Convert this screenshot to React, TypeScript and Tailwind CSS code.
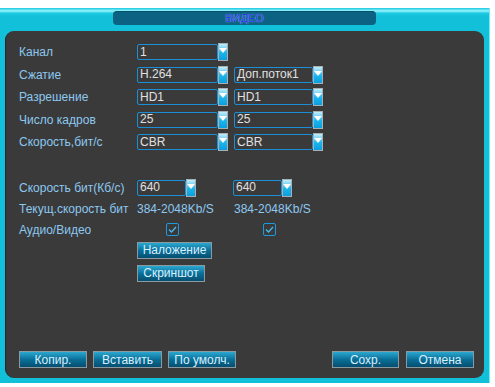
import React from "react";

const font = { fontFamily: '"Liberation Sans", Arial, sans-serif' };

function Arrow() {
  return (
    <div className="w-[10px] h-[18px] border border-[#a8b0b4] bg-gradient-to-b from-[#bfeefc] via-[#1cb8ee] to-[#0a9ee0] flex items-start justify-center pt-[4px]">
      <svg width="8" height="5" viewBox="0 0 8 5">
        <polygon points="0,0 8,0 4,5" fill="#ffffff" />
      </svg>
    </div>
  );
}

function Select({ value, w }: { value: string; w: string }) {
  return (
    <div className="flex items-center">
      <div className={`${w} h-[16px] border-[1.5px] border-[#1a8fd6] rounded-[2px] bg-[#3a3a3a] text-[#e0e0e0] text-[12px] leading-[13px] pl-[2px] flex items-center`}>
        {value}
      </div>
      <Arrow />
    </div>
  );
}

function Btn({ label, w }: { label: string; w: string }) {
  return (
    <div className={`${w} h-[17px] border border-[#8a9aa0] bg-gradient-to-b from-[#2aa8d0] via-[#0a6f98] to-[#064e70] text-[#d8f0ff] text-[12px] flex items-center justify-center leading-none`}>
      {label}
    </div>
  );
}

function Check() {
  return (
    <div className="w-[13px] h-[13px] border border-[#1a9ae0] rounded-[2px] flex items-center justify-center">
      <svg width="9" height="7" viewBox="0 0 9 7">
        <polyline points="1,3.5 3.5,6 8,1" fill="none" stroke="#4ab8f0" strokeWidth="1.3" />
      </svg>
    </div>
  );
}

function Label({ children }: { children: React.ReactNode }) {
  return <div className="w-[118px] text-[#8cc8f0] text-[12px]">{children}</div>;
}

export default function App() {
  const rows = [
    ["Канал", "1", null],
    ["Сжатие", "H.264", "Доп.поток1"],
    ["Разрешение", "HD1", "HD1"],
    ["Число кадров", "25", "25"],
    ["Скорость,бит/с", "CBR", "CBR"],
  ];
  return (
    <div className="w-[495px] h-[387px] bg-white pt-[8px]" style={font}>
      <div className="w-[490px] h-[375px] bg-[#12c0da] flex flex-col border-r border-[#7ae8f4] bg-[linear-gradient(to_bottom,#18c8e0_0px,#9af4fc_3px,#20cce4_5px,#12c0da_8px)]">
        <div className="h-[23px] flex justify-center pt-[3px]">
          <div className="w-[263px] h-[14px] rounded-[4px] bg-[#0b6282] border-t border-[#08506c] flex items-center justify-center">
            <span className="text-[11px] text-[#2236f0] leading-[13px] [text-shadow:0_0_1px_#c8e4ff]">ВИДЕО</span>
          </div>
        </div>
        <div className="mx-[5px] h-[347px] rounded-[9px] bg-[#3a3a3a] border-l border-[#242424] pl-[13px] pt-[10px] flex flex-col">
          {rows.map(([l, a, b]) => (
            <div key={l as string} className="h-[22.5px] flex items-center">
              <Label>{l}</Label>
              <Select value={a as string} w="w-[81px]" />
              {b && (
                <div className="ml-[6px]">
                  <Select value={b} w="w-[79px]" />
                </div>
              )}
            </div>
          ))}
          <div className="h-[23px]" />
          <div className="h-[22px] flex items-center">
            <Label>Скорость бит(Кб/с)</Label>
            <Select value="640" w="w-[49px]" />
            <div className="ml-[37px]">
              <Select value="640" w="w-[49px]" />
            </div>
          </div>
          <div className="h-[21px] flex items-center">
            <Label>Текущ.скорость бит</Label>
            <div className="w-[97px] text-[#8cc8f0] text-[12px]">384-2048Kb/S</div>
            <div className="text-[#8cc8f0] text-[12px]">384-2048Kb/S</div>
          </div>
          <div className="h-[20px] flex items-center">
            <Label>Аудио/Видео</Label>
            <div className="w-[97px] pl-[29px]">
              <Check />
            </div>
            <div className="pl-[29px]">
              <Check />
            </div>
          </div>
          <div className="pl-[118px] mt-[2px] flex flex-col gap-[6px]">
            <Btn label="Наложение" w="w-[75px]" />
            <Btn label="Скриншот" w="w-[68px]" />
          </div>
          <div className="flex-1" />
          <div className="flex items-center mb-[10px]">
            <Btn label="Копир." w="w-[68px]" />
            <div className="w-[6px]" />
            <Btn label="Вставить" w="w-[69px]" />
            <div className="w-[6px]" />
            <Btn label="По умолч." w="w-[68px]" />
            <div className="w-[96px]" />
            <Btn label="Сохр." w="w-[67px]" />
            <div className="w-[7px]" />
            <Btn label="Отмена" w="w-[68px]" />
          </div>
        </div>
      </div>
    </div>
  );
}
